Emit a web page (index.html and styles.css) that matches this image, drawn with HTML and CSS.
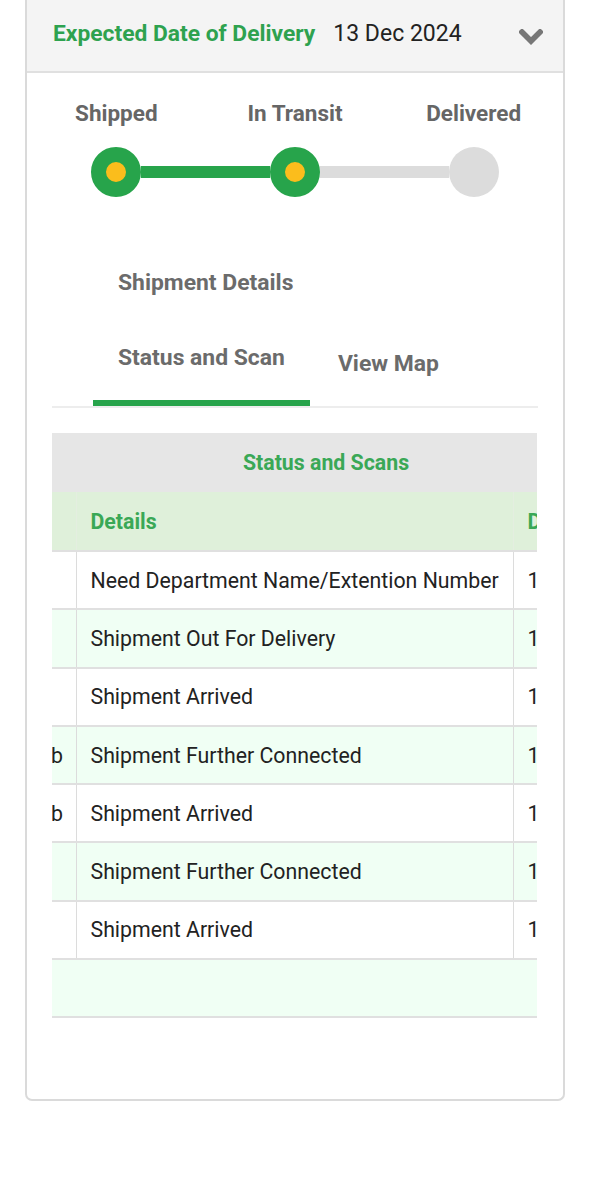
FILE: index.html
```html
<!DOCTYPE html>
<html lang="en">
<head>
<meta charset="utf-8">
<title>Shipment Tracking</title>
<link rel="stylesheet" href="styles.css">
</head>
<body>
<div class="card">
  <div class="card-head">
    <span class="edd-label">Expected Date of Delivery</span>
    <span class="edd-date">13 Dec 2024</span>
    <svg class="chev" width="24" height="16" viewBox="0 0 24 16" aria-hidden="true">
      <polyline points="3,3 12,12 21,3" fill="none" stroke="#777" stroke-width="5.5" stroke-linecap="square" stroke-linejoin="miter"/>
    </svg>
  </div>

  <div class="steps">
    <div class="step">
      <div class="step-label">Shipped</div>
      <div class="step-track"><span class="seg"></span><span class="dot done"></span><span class="seg green"></span></div>
    </div>
    <div class="step">
      <div class="step-label">In Transit</div>
      <div class="step-track"><span class="seg green"></span><span class="dot done"></span><span class="seg grey"></span></div>
    </div>
    <div class="step">
      <div class="step-label">Delivered</div>
      <div class="step-track"><span class="seg grey"></span><span class="dot"></span><span class="seg"></span></div>
    </div>
  </div>

  <div class="tabs">
    <div class="tab-row">
      <div class="tab first">Shipment Details</div>
    </div>
    <div class="tab-row second">
      <div class="tab active">Status and Scan</div>
      <div class="tab map">View Map</div>
    </div>
  </div>

  <div class="table-scroll">
    <table class="scans">
      <colgroup>
        <col class="c-loc">
        <col class="c-det">
        <col class="c-date">
      </colgroup>
      <thead>
        <tr class="title-row"><th colspan="3">Status and Scans</th></tr>
        <tr class="head-row"><th>Location</th><th>Details</th><th>Date</th></tr>
      </thead>
      <tbody>
        <tr><td>Surat</td><td>Need Department Name/Extention Number</td><td>12 Dec 2024</td></tr>
        <tr class="alt"><td>Surat</td><td>Shipment Out For Delivery</td><td>12 Dec 2024</td></tr>
        <tr><td>Surat</td><td>Shipment Arrived</td><td>12 Dec 2024</td></tr>
        <tr class="alt"><td>Surat Hub</td><td>Shipment Further Connected</td><td>11 Dec 2024</td></tr>
        <tr><td>Surat Hub</td><td>Shipment Arrived</td><td>11 Dec 2024</td></tr>
        <tr class="alt"><td>Delhi</td><td>Shipment Further Connected</td><td>10 Dec 2024</td></tr>
        <tr><td>Delhi</td><td>Shipment Arrived</td><td>10 Dec 2024</td></tr>
        <tr class="alt empty"><td colspan="3"></td></tr>
      </tbody>
    </table>
  </div>
</div>
</body>
</html>
```

FILE: styles.css
```css
* { box-sizing: border-box; }

html, body {
  margin: 0;
  padding: 0;
  background: #ffffff;
  font-family: Roboto, "Liberation Sans", Arial, sans-serif;
}

.card {
  margin: 0 25px 0 25px;
  width: 540px;
  height: 1101px;
  border: 2px solid #dadada;
  border-top: none;
  border-radius: 0 0 7px 7px;
  background: #fff;
}

/* header */
.card-head {
  height: 73px;
  background: #f4f4f4;
  border-bottom: 2px solid #e0e0e0;
  display: flex;
  align-items: center;
  padding: 0 20px 4px 26px;
}
.edd-label {
  color: #2ea24f;
  font-weight: 700;
  font-size: 22.8px;
}
.edd-date {
  color: #222;
  font-size: 23px;
  margin-left: 18px;
}
.chev {
  margin-left: auto;
  margin-top: 6px;
}

/* progress steps */
.steps {
  display: grid;
  grid-template-columns: repeat(3, 1fr);
  padding-top: 27px;
}
.step-label {
  text-align: center;
  color: #666;
  font-weight: 700;
  font-size: 22.5px;
  line-height: 26px;
}
.step-track {
  display: flex;
  align-items: center;
  margin-top: 21px;
}
.seg {
  flex: 1;
  height: 12px;
}
.seg.green { background: #27a44b; }
.seg.grey { background: #dcdcdc; }
.dot {
  width: 50px;
  height: 50px;
  border-radius: 50%;
  background: #dcdcdc;
  flex: none;
}
.dot.done {
  background: #fbbd1c;
  border: 15px solid #27a44b;
}

/* tabs */
.tabs {
  margin: 73px 25px 0 25px;
  border-bottom: 2px solid #ededed;
  padding-left: 41px;
}
.tab-row {
  display: flex;
  align-items: flex-end;
}
.tab {
  color: #6b6b6b;
  font-weight: 700;
  font-size: 22.9px;
  line-height: 26px;
  padding: 0 25px;
}
.tab.active {
  padding-top: 49px;
  padding-bottom: 29px;
  border-bottom: 6px solid #27a44b;
}
.tab.map {
  padding-left: 28px;
  padding-bottom: 29px;
}

/* table */
.table-scroll {
  margin: 25px 26px 0 25px;
  overflow: hidden;
}
.scans {
  table-layout: fixed;
  border-collapse: collapse;
  width: 748px;
  margin-left: -100px;
  font-size: 21.3px;
}
.c-loc { width: 124px; }
.c-det { width: 437px; }
.c-date { width: 187px; }

.scans th, .scans td {
  white-space: nowrap;
  overflow: hidden;
  text-align: left;
  padding: 0 14px;
}
.scans td:first-child { padding-left: 17px; }
.title-row th {
  height: 59px;
  background: #e6e6e6;
  color: #3aa856;
  font-weight: 700;
  text-align: center;
}
.head-row th {
  height: 59px;
  background: #dff0da;
  color: #3aa856;
  font-weight: 700;
  border-left: 1px solid #e4eee0;
}
.head-row th:first-child { border-left: none; }
.scans tbody td {
  height: 58.3px;
  color: #222;
  font-weight: 400;
  border-top: 2px solid #e0e0e0;
  border-left: 1px solid #dcdcdc;
}
.scans tbody td:first-child { border-left: none; }
.scans tbody tr.alt td { background: #f0fff4; }
.scans tbody tr:last-child td {
  border-bottom: 2px solid #e0e0e0;
}
```
